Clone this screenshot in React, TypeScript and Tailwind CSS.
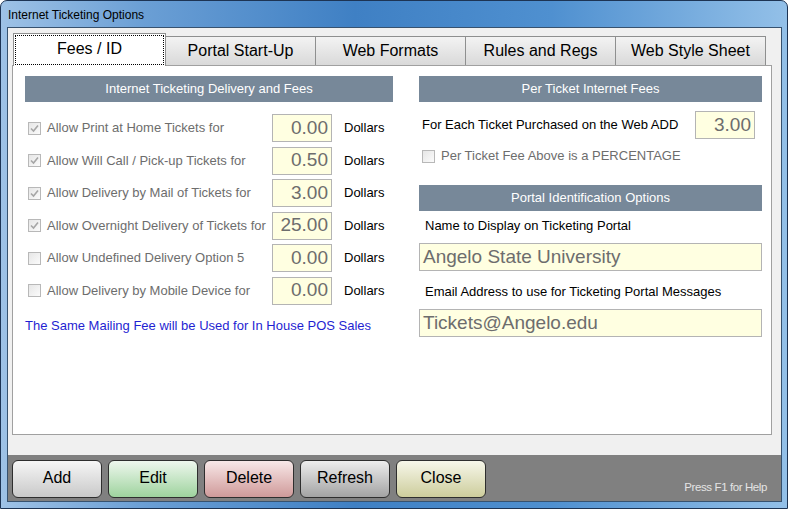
import type { ReactNode } from 'react';

const font = { fontFamily: '"Liberation Sans", Arial, sans-serif' };

const tabs = ['Portal Start-Up', 'Web Formats', 'Rules and Regs', 'Web Style Sheet'];

const deliveryRows = [
  { label: 'Allow Print at Home Tickets for', value: '0.00', checked: true },
  { label: 'Allow Will Call / Pick-up Tickets for', value: '0.50', checked: true },
  { label: 'Allow Delivery by Mail of Tickets for', value: '3.00', checked: true },
  { label: 'Allow Overnight Delivery of Tickets for', value: '25.00', checked: true },
  { label: 'Allow Undefined Delivery Option 5', value: '0.00', checked: false },
  { label: 'Allow Delivery by Mobile Device for', value: '0.00', checked: false },
];

const buttons = [
  { label: 'Add', cls: 'from-[#f6f6f6] to-[#c9c9c9]' },
  { label: 'Edit', cls: 'from-[#eef7ee] to-[#9ed39e]' },
  { label: 'Delete', cls: 'from-[#f7e8e8] to-[#cf9a9a]' },
  { label: 'Refresh', cls: 'from-[#eeeeee] to-[#a3a3a3]' },
  { label: 'Close', cls: 'from-[#f7f7ea] to-[#cdcd9c]' },
];

const CheckBox = ({ checked }: { checked: boolean }) => (
  <div className="w-[13px] h-[13px] shrink-0 border border-[#b8b8b8] bg-linear-to-br from-[#e6e6e6] to-[#fbfbfb] flex items-center justify-center">
    {checked && (
      <svg width="9" height="9" viewBox="0 0 9 9">
        <path d="M1 4.5 L3.5 7 L8 1.5" fill="none" stroke="#a6a6a6" strokeWidth="1.6" />
      </svg>
    )}
  </div>
);

const Header = ({ children }: { children: ReactNode }) => (
  <div className="h-[26px] bg-[#778899] text-white text-[13px] flex items-center justify-center">
    {children}
  </div>
);

const Field = ({ value, className }: { value: string; className: string }) => (
  <div className={`h-[28px] border border-[#b4b4b4] bg-[#ffffe1] text-[#6d6d6d] text-[19px] flex items-center ${className}`}>
    {value}
  </div>
);

export default function App() {
  return (
    <div style={font} className="w-[788px] h-[509px] flex flex-col rounded-t-[7px] border border-[#1d3454] bg-[linear-gradient(to_right,#9ec2e6,#6b9fd5_18%,#3f80c4_45%,#4f90d0_70%,#93c0e8)]">
      {/* title bar */}
      <div className="h-[26px] pl-[7px] pt-[1px] flex items-center text-[12px] text-black">
        Internet Ticketing Options
      </div>

      {/* client */}
      <div className="h-[475px] ml-[6px] mr-[5px] border border-[#37526f] flex flex-col">
        <div className="h-[427px] bg-[#f0f0f0] pl-[4px] pt-[5px]">
          {/* tab strip */}
          <div className="h-[32px] flex items-end pl-[1px]">
            <div className="relative z-10 w-[153px] h-[33px] -mb-px bg-white border border-b-0 border-[#8e8f8f] p-[1px]">
              <div className="w-full h-[30px] pb-[2px] border border-dotted border-black flex items-center justify-center text-[16px] text-black">
                Fees / ID
              </div>
            </div>
            {tabs.map((t) => (
              <div
                key={t}
                className="w-[150px] h-[29px] border-t border-r border-[#8e8f8f] bg-linear-to-b from-[#f3f3f3] to-[#d9d9d9] flex items-center justify-center text-[16px] text-black"
              >
                {t}
              </div>
            ))}
          </div>

          {/* tab panel */}
          <div className="w-[760px] h-[370px] border border-[#a0a0a0] bg-white pl-[12px] pt-[10px] flex">
            {/* left column */}
            <div className="w-[368px] flex flex-col">
              <Header>Internet Ticketing Delivery and Fees</Header>
              <div className="mt-[12px] flex flex-col gap-[4.5px]">
                {deliveryRows.map((r, i) => (
                  <div key={i} className="h-[28px] flex items-center">
                    <div className="w-[247px] flex items-center pl-[3px]">
                      <CheckBox checked={r.checked} />
                      <span className="ml-[6px] text-[13px] text-[#6d6d6d] whitespace-nowrap">{r.label}</span>
                    </div>
                    <Field value={r.value} className="w-[60px] justify-end pr-[3px]" />
                    <span className="ml-[12px] text-[13px] text-black">Dollars</span>
                  </div>
                ))}
              </div>
              <div className="mt-[11px] text-[13px] text-[#1f1fd2] whitespace-nowrap">
                The Same Mailing Fee will be Used for In House POS Sales
              </div>
            </div>

            {/* right column */}
            <div className="w-[343px] ml-[26px] flex flex-col">
              <Header>Per Ticket Internet Fees</Header>
              <div className="mt-[9px] h-[28px] flex items-center pl-[3px]">
                <span className="text-[13px] text-black whitespace-nowrap">For Each Ticket Purchased on the Web ADD</span>
                <Field value="3.00" className="ml-auto mr-[7px] w-[60px] justify-end pr-[3px]" />
              </div>
              <div className="mt-[9px] h-[16px] flex items-center pl-[3px]">
                <CheckBox checked={false} />
                <span className="ml-[6px] text-[13px] text-[#6d6d6d] whitespace-nowrap">Per Ticket Fee Above is a PERCENTAGE</span>
              </div>
              <div className="mt-[21px]">
                <Header>Portal Identification Options</Header>
              </div>
              <div className="mt-[7px] h-[16px] pl-[6px] text-[13px] text-black leading-[16px]">
                Name to Display on Ticketing Portal
              </div>
              <Field value="Angelo State University" className="mt-[9px] pl-[3px]" />
              <div className="mt-[13px] h-[16px] pl-[6px] text-[13px] text-black leading-[16px]">
                Email Address to use for Ticketing Portal Messages
              </div>
              <Field value="Tickets@Angelo.edu" className="mt-[9px] pl-[3px]" />
            </div>
          </div>
        </div>

        {/* bottom bar */}
        <div className="flex-1 bg-[#808080] pl-[4px] pt-[5px] flex items-start">
          <div className="flex gap-[6px]">
            {buttons.map((b) => (
              <div
                key={b.label}
                className={`w-[90px] h-[38px] pb-[2px] rounded-[6px] border border-[#2e2e2e] bg-linear-to-b ${b.cls} flex items-center justify-center text-[16px] text-black`}
              >
                {b.label}
              </div>
            ))}
          </div>
          <div className="ml-auto mr-[14px] mt-[19px] text-[11.5px] tracking-[-0.4px] text-[#e4e4e4]">
            Press F1 for Help
          </div>
        </div>
      </div>
    </div>
  );
}
